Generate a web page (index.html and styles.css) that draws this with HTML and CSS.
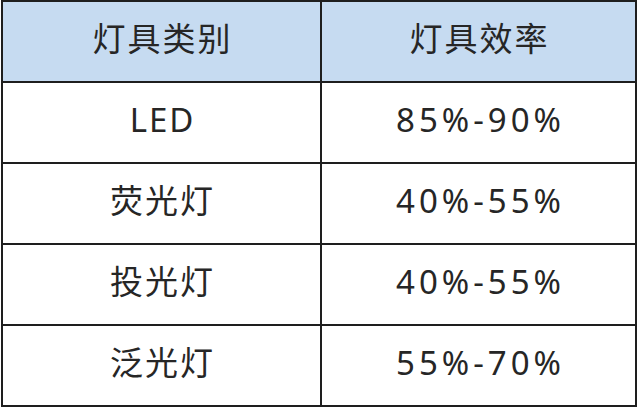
FILE: index.html
```html
<!DOCTYPE html>
<html lang="zh">
<head>
<meta charset="utf-8">
<link rel="stylesheet" href="styles.css">
</head>
<body>
<table class="tbl">
  <thead>
    <tr class="head"><th>灯具类别</th><th>灯具效率</th></tr>
  </thead>
  <tbody>
    <tr><td>LED</td><td class="num">85%-90%</td></tr>
    <tr><td>荧光灯</td><td class="num">40%-55%</td></tr>
    <tr><td>投光灯</td><td class="num">40%-55%</td></tr>
    <tr><td>泛光灯</td><td class="num">55%-70%</td></tr>
  </tbody>
</table>
</body>
</html>
```
FILE: styles.css
```css
html, body {
  margin: 0;
  padding: 0;
  background: #ffffff;
}
body {
  padding: 0 0 0 1px;
}
.tbl {
  border-collapse: collapse;
  width: 636px;
  table-layout: fixed;
  font-family: "Noto Sans", "Noto Sans CJK SC", sans-serif;
  color: #262626;
}
.tbl th, .tbl td {
  box-sizing: border-box;
  border: 2px solid #1e1e1e;
  height: 81px;
  padding: 0 0 5px 2px;
  text-align: center;
  vertical-align: middle;
  font-size: 33px;
  font-weight: 400;
  letter-spacing: 2px;
  line-height: 1.2;
}
.tbl td.num {
  letter-spacing: 4px;
  padding-left: 4px;
}
.tbl th:first-child, .tbl td:first-child {
  width: 319px;
}
.head th {
  background: #c6dbf1;
}
```
